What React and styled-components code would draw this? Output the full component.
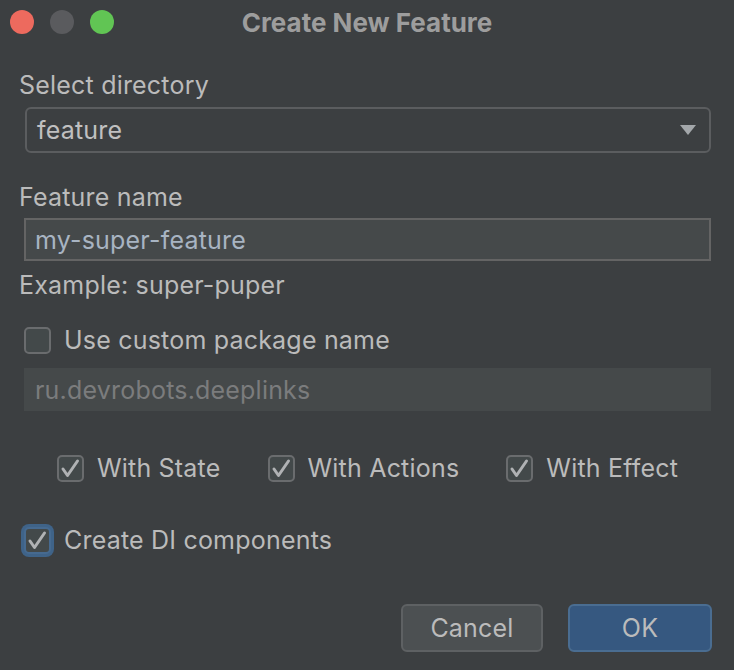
import React from 'react';
import styled, { createGlobalStyle } from 'styled-components';

const GlobalStyle = createGlobalStyle`
  html, body {
    margin: 0;
    padding: 0;
    background: #3c3f41;
  }
  * {
    box-sizing: border-box;
  }
`;

// Dialog window
const Dialog = styled.div`
  width: 734px;
  height: 670px;
  background: #3c3f41;
  font-family: Inter, "Noto Sans", sans-serif;
  color: #bbbbbb;
  letter-spacing: 0.2px;
  overflow: hidden;
`;

// Title bar with traffic lights
const TitleBar = styled.div`
  height: 44px;
  display: grid;
  grid-template-columns: 1fr auto 1fr;
  align-items: center;
  padding: 0 10px;
`;

const Lights = styled.div`
  display: flex;
  gap: 16px;
`;

const Light = styled.span`
  width: 24px;
  height: 24px;
  border-radius: 50%;
  background: ${props => props.color};
`;

const Title = styled.div`
  font-size: 26px;
  font-weight: 700;
  color: #9d9d9d;
  letter-spacing: 0;
`;

// Form body
const Body = styled.div`
  display: flex;
  flex-direction: column;
  padding: 0 23px 0 19px;
`;

const Label = styled.div`
  font-size: 25px;
  line-height: 28px;
  margin-top: ${props => props.$top}px;
`;

const Combo = styled.div`
  margin: 8px 0 0 6px;
  height: 46px;
  border: 2px solid #5b5d5f;
  border-radius: 6px;
  display: flex;
  align-items: center;
  justify-content: space-between;
  padding: 0 13px 0 10px;
  font-size: 25px;
  color: #c0c0c0;
`;

const Arrow = styled.span`
  width: 0;
  height: 0;
  border-left: 8px solid transparent;
  border-right: 8px solid transparent;
  border-top: 10px solid #a3a7aa;
`;

const Field = styled.div`
  margin: ${props => props.$top}px 0 0 5px;
  height: 43px;
  background: #45494a;
  border: 2px solid ${props => (props.$disabled ? '#45494a' : '#646464')};
  display: flex;
  align-items: center;
  padding: 0 9px;
  font-size: 25px;
  color: ${props => (props.$disabled ? '#7b7c7d' : '#a8b4c2')};
`;

const CheckRow = styled.label`
  display: flex;
  align-items: center;
  gap: 13px;
  height: 28px;
  font-size: 25px;
  margin-left: ${props => props.$left}px;
`;

const Box = styled.span`
  width: 27px;
  height: 27px;
  flex: none;
  border: 2px solid ${props => (props.$focused ? '#466a90' : '#6a6c6e')};
  border-radius: 5px;
  background: #43494a;
  display: flex;
  align-items: center;
  justify-content: center;
  box-shadow: ${props => (props.$focused ? '0 0 0 3px #3f6388' : 'none')};
`;

const Options = styled.div`
  display: flex;
  justify-content: center;
  gap: 47px;
  margin: 43px 0 0 5px;
`;

const Buttons = styled.div`
  display: flex;
  justify-content: flex-end;
  gap: 25px;
  margin: 50px -1px 0 0;
`;

const Button = styled.div`
  width: ${props => props.$width}px;
  height: 48px;
  border-radius: 6px;
  display: flex;
  align-items: center;
  justify-content: center;
  font-size: 25px;
  color: #bbbbbb;
  background: ${props => (props.$primary ? '#365880' : '#4c5052')};
  border: 2px solid ${props => (props.$primary ? '#4a6d91' : '#5e6163')};
`;

const Check = () => (
  <svg width="21" height="21" viewBox="0 0 21 21">
    <path d="M3 11 L7.5 17.5 L17.5 3" fill="none" stroke="#b0b2b4" strokeWidth="3" strokeLinecap="round" strokeLinejoin="round" />
  </svg>
);

const Checkbox = ({ checked, focused, label, left = 5 }) => (
  <CheckRow $left={left}>
    <Box $focused={focused}>{checked && <Check />}</Box>
    {label}
  </CheckRow>
);

const App = () => {
  const options = ['With State', 'With Actions', 'With Effect'];

  return (
    <Dialog>
      <GlobalStyle />
      <TitleBar>
        <Lights>
          <Light color="#ed6a5e" />
          <Light color="#5a5b5e" />
          <Light color="#61c554" />
        </Lights>
        <Title>Create New Feature</Title>
        <div />
      </TitleBar>
      <Body>
        <Label $top={27}>Select directory</Label>
        <Combo>
          feature
          <Arrow />
        </Combo>
        <Label $top={30}>Feature name</Label>
        <Field $top={7}>my-super-feature</Field>
        <Label $top={10}>Example: super-puper</Label>
        <div style={{ marginTop: 27 }}>
          <Checkbox label="Use custom package name" />
        </div>
        <Field $top={14} $disabled>ru.devrobots.deeplinks</Field>
        <Options>
          {options.map(option => (
            <Checkbox key={option} checked label={option} left={0} />
          ))}
        </Options>
        <div style={{ marginTop: 44 }}>
          <Checkbox checked focused label="Create DI components" />
        </div>
        <Buttons>
          <Button $width={142}>Cancel</Button>
          <Button $width={144} $primary>OK</Button>
        </Buttons>
      </Body>
    </Dialog>
  );
};

export default App;
